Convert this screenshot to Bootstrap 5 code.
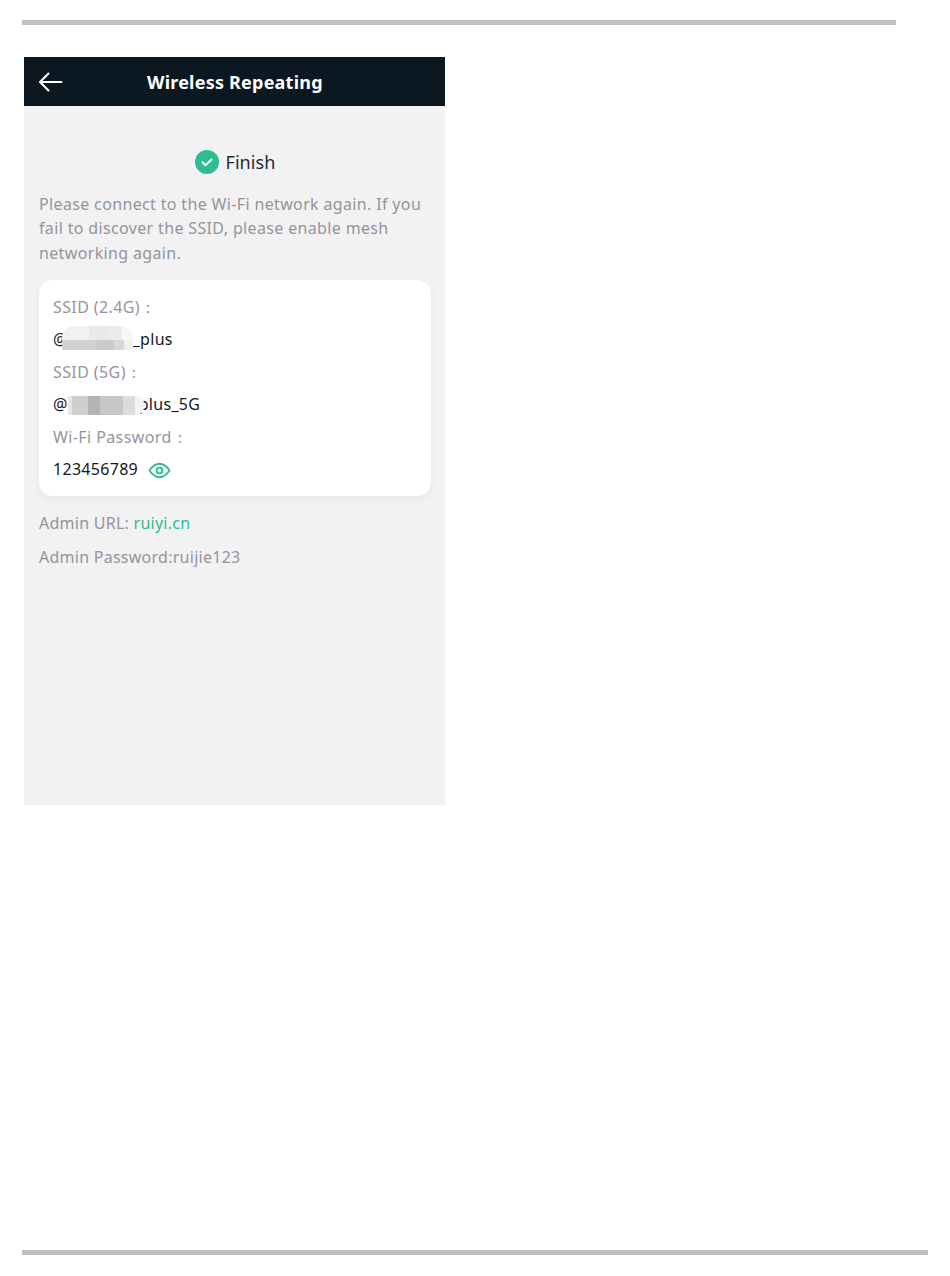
<!DOCTYPE html>
<html lang="en"><head><meta charset="utf-8"><title>Wireless Repeating</title>
<link href="https://cdn.jsdelivr.net/npm/bootstrap@5.3.0/dist/css/bootstrap.min.css" rel="stylesheet">
<style>
body{background:#fff;font-family:"Noto Sans","Liberation Sans",sans-serif;font-size:16px;letter-spacing:.26px}
.rule-top,.rule-bottom{height:5px;background:#c1c1c1;margin-left:22px}
.rule-top{width:874px;margin-top:20px}
.rule-bottom{width:906px;margin-top:445px}
.phone{width:421px;height:748px;margin:32px 0 0 24px;background:#f2f2f3}
.phone-head{height:49px;background:#0b1821;color:#fff;padding-left:15px}
.phone-head svg{flex:none}
.phone-title{font-size:18px;font-weight:700;margin-left:84px;letter-spacing:.22px;line-height:51px;height:49px}
.phone-body{padding:44px 14px 0 15px}
.finish{font-size:18px;line-height:24px;color:#1f2a33;gap:6px;letter-spacing:.1px;padding-left:1px}
.muted-text{color:#94949c}
.note{line-height:24.5px;margin:17.7px 0 14.8px;width:390px;letter-spacing:.35px}
.info-panel{background:#fff;border-radius:14px;box-shadow:0 3px 8px rgba(20,30,60,.05);padding:11px 14px 10px;height:216px}
.info-line{height:32.5px;line-height:32.5px;white-space:nowrap}
.label-line{letter-spacing:.4px}
.value-text{color:#14181c;letter-spacing:.3px}
.blur-mask{display:inline-block;position:relative;z-index:1;vertical-align:middle}
.mask-a{width:71px;height:24px;margin:-7px 0 0 -6px;border-radius:12px 13px 4px 0;
 background:linear-gradient(90deg,#d0d2d2 0 50%,#cbcbcb 50% 73%,#d8d8d8 73% 88%,#f1f1f1 88%) bottom/100% 42% no-repeat,
 linear-gradient(90deg,#f0f1f1 0 38%,#e9e9e9 38% 65%,#ebebeb 65% 85%,#f6f6f6 85%) top/100% 58% no-repeat}
.mask-b{width:76px;height:19px;margin:-2px -5px 0 0;border-radius:0 8px 8px 0;
 background:linear-gradient(90deg,#e6e6e6 0 5%,#cfcfcf 5% 26%,#b5b3b3 26% 42%,#c7c7c7 42% 72%,#dcdcdc 72% 88%,#f4f4f4 88%)}
.eye{margin-left:10px;vertical-align:-4px}
.admin{line-height:24px}
.admin a{color:#2fbb94;text-decoration:none}
.admin-first{margin-top:15px}
.admin-second{margin-top:10px}
</style></head>
<body>
<div class="rule-top"></div>
<div class="phone">
  <div class="phone-head d-flex align-items-center">
    <svg width="24" height="20" viewBox="0 0 24 20" fill="none" stroke="#fff" stroke-width="2" stroke-linecap="round" stroke-linejoin="round"><path d="M22.500 10H1.500M9.500 1.500 1 10 9.500 18.500"/></svg>
    <div class="phone-title">Wireless Repeating</div>
  </div>
  <div class="phone-body">
    <div class="finish d-flex align-items-center justify-content-center">
      <svg width="24" height="24" viewBox="0 0 24 24"><circle cx="12" cy="12" r="12" fill="#2fbb94"/><path d="M7.500 12.300l3 3 6-5.800" fill="none" stroke="#fff" stroke-width="2" stroke-linecap="round" stroke-linejoin="round"/></svg>
      <span>Finish</span>
    </div>
    <p class="note muted-text">Please connect to the Wi-Fi network again. If you fail to discover the SSID, please enable mesh networking again.</p>
    <div class="info-panel">
      <div class="info-line label-line muted-text">SSID (2.4G)：</div>
      <div class="info-line value-text">@<span class="blur-mask mask-a"></span>_plus</div>
      <div class="info-line label-line muted-text">SSID (5G)：</div>
      <div class="info-line value-text">@<span class="blur-mask mask-b"></span>plus_5G</div>
      <div class="info-line label-line muted-text">Wi-Fi Password：</div>
      <div class="info-line value-text">123456789<svg class="eye" width="23" height="17" viewBox="0 0 24 17" fill="none" stroke="#2fbb94" stroke-width="2"><path d="M1.500 8.500C5 3.500 8.500 1.500 12 1.500s7 2 10.500 7c-3.500 5-7 7-10.500 7s-7-2-10.500-7z" stroke-linejoin="round"/><circle cx="12" cy="8.500" r="3"/></svg></div>
    </div>
    <div class="admin admin-first muted-text">Admin URL: <a href="#">ruiyi.cn</a></div>
    <div class="admin admin-second muted-text">Admin Password:ruijie123</div>
  </div>
</div>
<div class="rule-bottom"></div>
<script src="https://cdn.jsdelivr.net/npm/bootstrap@5.3.0/dist/js/bootstrap.bundle.min.js"></script>
</body></html>
